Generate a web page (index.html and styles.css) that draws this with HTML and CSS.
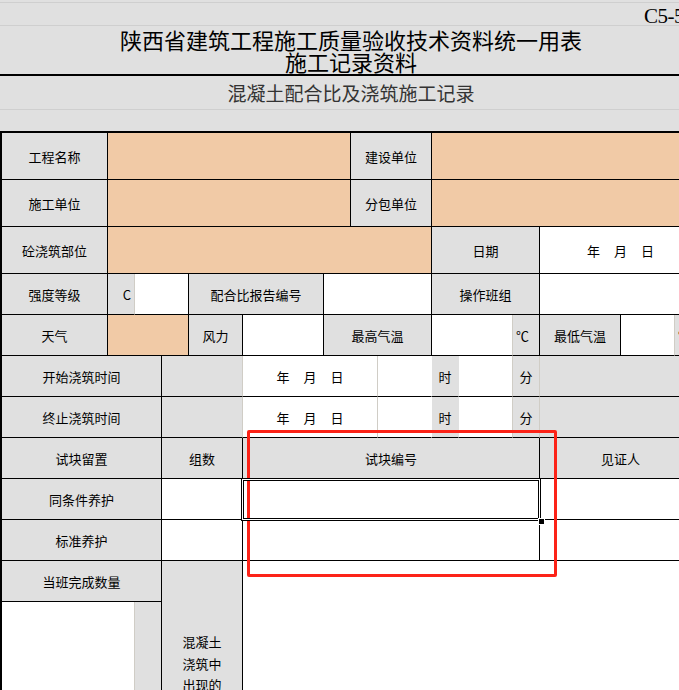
FILE: index.html
```html
<!DOCTYPE html>
<html lang="zh-CN">
<head>
<meta charset="utf-8">
<title>混凝土配合比及浇筑施工记录</title>
<link rel="stylesheet" href="styles.css">
</head>
<body>
<div class="sheet">
  <header class="head">
    <div class="h-top"></div>
    <div class="h-code">C5-5-1</div>
    <div class="h-title">
      <div class="t-line">陕西省建筑工程施工质量验收技术资料统一用表</div>
      <div class="t-line">施工记录资料</div>
    </div>
    <div class="h-sub">混凝土配合比及浇筑施工记录</div>
    <div class="h-gap"></div>
  </header>

  <div class="grid">
    <!-- row 1 -->
    <div class="c g">工程名称</div>
    <div class="c p s6"></div>
    <div class="c g s2">建设单位</div>
    <div class="c p s6"></div>
    <!-- row 2 -->
    <div class="c g">施工单位</div>
    <div class="c p s6"></div>
    <div class="c g s2">分包单位</div>
    <div class="c p s6"></div>
    <!-- row 3 -->
    <div class="c g">砼浇筑部位</div>
    <div class="c p s8"></div>
    <div class="c g s3">日期</div>
    <div class="c s3"><span class="ymd"><span>年</span><span>月</span><span>日</span></span></div>
    <!-- row 4 -->
    <div class="c g">强度等级</div>
    <div class="c g lr end">C</div>
    <div class="c s2"></div>
    <div class="c g s2">配合比报告编号</div>
    <div class="c s3"></div>
    <div class="c g s3">操作班组</div>
    <div class="c s3"></div>
    <!-- row 5 -->
    <div class="c g">天气</div>
    <div class="c p s3"></div>
    <div class="c g">风力</div>
    <div class="c"></div>
    <div class="c g s3">最高气温</div>
    <div class="c s2 lr"></div>
    <div class="c g start">℃</div>
    <div class="c g">最低气温</div>
    <div class="c lr"></div>
    <div class="c g start">℃</div>
    <!-- row 6 -->
    <div class="c g s3">开始浇筑时间</div>
    <div class="c g s2 lr"></div>
    <div class="c s3 lr"><span class="ymd"><span>年</span><span>月</span><span>日</span></span></div>
    <div class="c nr"></div>
    <div class="c g nr">时</div>
    <div class="c lr"></div>
    <div class="c g lr">分</div>
    <div class="c g s3"></div>
    <!-- row 7 -->
    <div class="c g s3">终止浇筑时间</div>
    <div class="c g s2 lr"></div>
    <div class="c s3 lr"><span class="ymd"><span>年</span><span>月</span><span>日</span></span></div>
    <div class="c nr"></div>
    <div class="c g nr">时</div>
    <div class="c lr"></div>
    <div class="c g lr">分</div>
    <div class="c g s3"></div>
    <!-- row 8 -->
    <div class="c g s3">试块留置</div>
    <div class="c g s2">组数</div>
    <div class="c g s7">试块编号</div>
    <div class="c g s3">见证人</div>
    <!-- row 9 -->
    <div class="c g s3">同条件养护</div>
    <div class="c s2"></div>
    <div class="c s7"></div>
    <div class="c s3"></div>
    <!-- row 10 -->
    <div class="c g s3">标准养护</div>
    <div class="c s2"></div>
    <div class="c s7"></div>
    <div class="c s3"></div>
    <!-- row 11 -->
    <div class="c g s3">当班完成数量</div>
    <div class="c g s2 r4 vert"><div class="vtext">混凝土浇筑中出现的问题及处理情况</div></div>
    <div class="c s10 r4 nr nb"></div>
    <!-- rows 12-14 -->
    <div class="c s2 r3 lr nb"></div>
    <div class="c g r3 nb"></div>
  </div>

  <div class="redbox"></div>
  <div class="sel"><span class="handle"></span></div>
</div>
</body>
</html>
```

FILE: styles.css
```css
html, body {
  margin: 0;
  overflow: hidden;
  background: #fff;
}

body {
  font-family: "Noto Sans CJK SC", "Noto Sans", sans-serif;
  color: #000;
}

.sheet {
  position: relative;
  width: 702px;
}

/* ---------- header block ---------- */
.head {
  background: #e0e0e0;
}

.h-top {
  height: 2px;
  border-bottom: 1px solid #cfcfcf;
}

.h-code {
  height: 20px;
  padding-top: 2px;
  padding-left: 644px;
  border-bottom: 1px solid #cfcfcf;
  font-family: "Liberation Serif", serif;
  font-size: 21px;
  line-height: 22px;
  letter-spacing: -0.5px;
  white-space: nowrap;
  overflow: hidden;
}

.h-title {
  height: 48px;
  border-bottom: 2px solid #000;
  display: flex;
  flex-direction: column;
  justify-content: center;
  align-items: center;
  font-size: 22px;
  font-weight: 400;
}

.t-line {
  height: 22px;
  line-height: 22px;
  overflow: visible;
}

.h-sub {
  height: 33px;
  border-bottom: 1px solid #cfcfcf;
  display: flex;
  align-items: center;
  justify-content: center;
  font-size: 19px;
  color: #333;
}

.h-gap {
  height: 21px;
}

/* ---------- form grid ---------- */
.grid {
  display: grid;
  grid-template-columns: 106px 27px 27px 27px 54px 81px 27px 27px 54px 27px 54px 27px 81px 54px 27px;
  grid-template-rows: 47px 47px 47px repeat(11, 41px);
  border-top: 2px solid #000;
  border-left: 2px solid #000;
  font-size: 13px;
}

.c {
  display: flex;
  align-items: center;
  justify-content: center;
  background: #fff;
  border-right: 1px solid #000;
  border-bottom: 1px solid #000;
  white-space: nowrap;
  overflow: hidden;
}

.g { background: #e0e0e0; }
.p { background: #f1caa6; }

.lr { border-right-color: #d0cdc6; }
.nr { border-right-color: transparent; }
.nb { border-bottom-color: transparent; }

.end { justify-content: flex-end; padding-right: 3px; }
.start { justify-content: flex-start; padding-left: 3px; }

.s2 { grid-column: span 2; }
.s3 { grid-column: span 3; }
.s6 { grid-column: span 6; }
.s7 { grid-column: span 7; }
.s8 { grid-column: span 8; }
.s10 { grid-column: span 10; }
.r3 { grid-row: span 3; }
.r4 { grid-row: span 4; }

.ymd {
  display: flex;
  gap: 14px;
}

.vert {
  align-items: flex-start;
  padding-top: 70px;
  white-space: normal;
}

.vtext {
  width: 40px;
  line-height: 21.5px;
  text-align: center;
}

/* ---------- overlays ---------- */
.redbox {
  position: absolute;
  left: 247px;
  top: 430px;
  width: 310px;
  height: 147px;
  box-sizing: border-box;
  border: 3px solid #fc2318;
  border-radius: 2px;
}

.sel {
  position: absolute;
  left: 241px;
  top: 478px;
  width: 300px;
  height: 43px;
  box-sizing: border-box;
  border: 1px solid #000;
  box-shadow: inset 0 0 0 1px #fff, inset 0 0 0 2px #000;
}

.handle {
  position: absolute;
  right: -5px;
  bottom: -5px;
  width: 5px;
  height: 5px;
  background: #000;
  border: 1px solid #fff;
}
```
